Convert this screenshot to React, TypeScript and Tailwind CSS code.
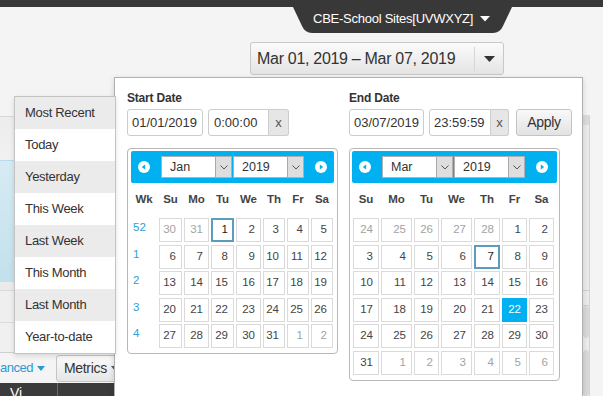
import React from "react";

const cal1Rows: string[][] = [
  ["~30", "~31", "*1", "2", "3", "4", "5"],
  ["6", "7", "8", "9", "10", "11", "12"],
  ["13", "14", "15", "16", "17", "18", "19"],
  ["20", "21", "22", "23", "24", "25", "26"],
  ["27", "28", "29", "30", "31", "~1", "~2"],
];
const cal1Wk = ["52", "1", "2", "3", "4"];
const cal2Rows: string[][] = [
  ["~24", "~25", "~26", "~27", "~28", "1", "2"],
  ["3", "4", "5", "6", "*7", "8", "9"],
  ["10", "11", "12", "13", "14", "15", "16"],
  ["17", "18", "19", "20", "21", "#22", "23"],
  ["24", "25", "26", "27", "28", "29", "30"],
  ["31", "~1", "~2", "~3", "~4", "~5", "~6"],
];
const dayNames = ["Su", "Mo", "Tu", "We", "Th", "Fr", "Sa"];
const presets = [
  "Most Recent",
  "Today",
  "Yesterday",
  "This Week",
  "Last Week",
  "This Month",
  "Last Month",
  "Year-to-date",
];

function DayCell({ v }: { v: string }) {
  const mark = v[0];
  const text = mark === "~" || mark === "*" || mark === "#" ? v.slice(1) : v;
  let cls =
    "flex h-[24px] items-center justify-end border border-[#dadada] bg-white pr-[5px] text-[11.5px] text-[#444]";
  if (mark === "~")
    cls =
      "flex h-[24px] items-center justify-end border border-[#dadada] bg-white pr-[5px] text-[11.5px] text-[#a3a3a3]";
  if (mark === "*")
    cls =
      "flex h-[24px] items-center justify-end border-2 border-[#5b9cc0] bg-white pr-[4px] text-[11.5px] text-[#222]";
  if (mark === "#")
    cls =
      "flex h-[24px] items-center justify-end border border-[#00b0f0] bg-[#00b0f0] pr-[5px] text-[11.5px] text-white";
  return <div className={cls}>{text}</div>;
}

function NavIcon({ dir }: { dir: "l" | "r" }) {
  return (
    <svg width="12" height="12" viewBox="0 0 12 12" className="shrink-0">
      <circle cx="6" cy="6" r="6" fill="#ffffff" />
      {dir === "l" ? (
        <polygon points="7.2,3.4 7.2,8.6 3.8,6" fill="#00b0f0" />
      ) : (
        <polygon points="4.8,3.4 4.8,8.6 8.2,6" fill="#00b0f0" />
      )}
    </svg>
  );
}

function Select({ label }: { label: string }) {
  return (
    <div className="flex h-[22px] w-[71px] border border-[#b0b0b0] bg-white">
      <span className="flex-1 pl-[8px] text-[12.5px] leading-[20px] text-[#333]">{label}</span>
      <span className="flex w-[16px] items-center justify-center border-l border-[#a9a9a9] bg-[#dedede]">
        <svg width="8" height="5" viewBox="0 0 8 5">
          <polyline points="0.5,0.5 4,4 7.5,0.5" fill="none" stroke="#555" strokeWidth="1" />
        </svg>
      </span>
    </div>
  );
}

function CalHeader({ month }: { month: string }) {
  return (
    <div className="flex h-[32px] items-center rounded-[2px] bg-[#00b0f0]">
      <div className="ml-[7px]">
        <NavIcon dir="l" />
      </div>
      <div className="ml-[11px]">
        <Select label={month} />
      </div>
      <div className="ml-[1px]">
        <Select label="2019" />
      </div>
      <div className="ml-[11px]">
        <NavIcon dir="r" />
      </div>
    </div>
  );
}

function Calendar1() {
  return (
    <div className="w-[211px] rounded-[4px] border border-[#b8b8b8] bg-white px-[3px] pb-[5px] pt-[2px]">
      <CalHeader month="Jan" />
      <div className="mt-[4px] grid h-[26px] grid-cols-[26px_23px_25px_23px_25px_22px_22px_22px] items-center gap-x-[2px] text-center text-[11.5px] font-bold text-[#444]">
        <span>Wk</span>
        {dayNames.map((d) => (
          <span key={d}>{d}</span>
        ))}
      </div>
      <div className="mt-[5px] grid grid-cols-[26px_23px_25px_23px_25px_22px_22px_22px] gap-x-[2px] gap-y-[2.5px]">
        {cal1Rows.map((row, i) => (
          <React.Fragment key={i}>
            <div className="h-[24px] pl-[2px] pt-[1px] text-[11.5px] text-[#2a9fd8]">{cal1Wk[i]}</div>
            {row.map((v, j) => (
              <DayCell key={j} v={v} />
            ))}
          </React.Fragment>
        ))}
      </div>
    </div>
  );
}

function Calendar2() {
  return (
    <div className="w-[211px] rounded-[4px] border border-[#b8b8b8] bg-white px-[2px] pb-[5px] pt-[2px]">
      <CalHeader month="Mar" />
      <div className="ml-[1px] mt-[4px] grid h-[26px] grid-cols-[26px_31px_25px_31px_26px_25px_25px] items-center gap-x-[2px] text-center text-[11.5px] font-bold text-[#444]">
        {dayNames.map((d) => (
          <span key={d}>{d}</span>
        ))}
      </div>
      <div className="ml-[1px] mt-[5px] grid grid-cols-[26px_31px_25px_31px_26px_25px_25px] gap-x-[2px] gap-y-[2.5px]">
        {cal2Rows.map((row, i) => (
          <React.Fragment key={i}>
            {row.map((v, j) => (
              <DayCell key={j} v={v} />
            ))}
          </React.Fragment>
        ))}
      </div>
    </div>
  );
}

export default function App() {
  return (
    <div className="relative h-[396px] w-[603px] overflow-hidden bg-[#f4f4f4] font-['Liberation_Sans',Arial,sans-serif]">
      {/* top bar */}
      <div className="h-[7px] bg-[#383838]" />
      <div className="flex justify-end pr-[91px]">
        <div className="relative flex h-[26px] w-[219px] items-center pb-[3px] pl-[20px]">
          <svg className="absolute inset-0" width="219" height="26" viewBox="0 0 219 26">
            <path d="M0,0 L219,0 L210,19 Q207,26 200,26 L19,26 Q12,26 9,19 Z" fill="#383838" />
          </svg>
          <span className="relative text-[13px] tracking-[-0.25px] text-white">CBE-School Sites[UVWXYZ]</span>
          <svg className="relative ml-[7px]" width="10" height="6" viewBox="0 0 10 6">
            <polygon points="0,0 10,0 5,5.5" fill="#ffffff" />
          </svg>
        </div>
      </div>

      {/* date range button */}
      <div className="mt-[9px] flex justify-end pr-[99px]">
        <div className="flex h-[33px] w-[254px] items-center rounded-[3px] border border-[#c8c8c8] bg-gradient-to-b from-[#fbfbfb] to-[#e4e4e4]">
          <span className="flex-1 pl-[6px] text-[16px] tracking-[-0.3px] text-[#333]">Mar 01, 2019 – Mar 07, 2019</span>
          <span className="h-[24px] border-l border-[#d6d6d6]" />
          <span className="flex w-[28px] items-center justify-center">
            <svg width="11" height="6" viewBox="0 0 11 6">
              <polygon points="0,0 11,0 5.5,6" fill="#333" />
            </svg>
          </span>
        </div>
      </div>

      {/* page body behind the popup */}
      <div className="flex h-[321px]">
        <div className="flex w-[114px] flex-col">
          <div className="h-[41px] shrink-0" />
          <div className="h-px shrink-0 bg-[#d8d8d8]" />
          <div className="h-[43px] shrink-0 bg-gradient-to-b from-[#ededed] to-[#f1f1f1]" />
          <div className="h-[122px] shrink-0 border-t border-[#b7dbe9] bg-gradient-to-b from-[#d6ebf3] to-[#c2e1ec]" />
          <div className="h-[8px] shrink-0 bg-[#ebebeb]" />
          <div className="h-px shrink-0 bg-[#d9d9d9]" />
          <div className="h-[31px] shrink-0 bg-[#efefef]" />
          <div className="h-px shrink-0 bg-[#dcdcdc]" />
          <div className="h-[29px] shrink-0 bg-[#f0f0f0]" />
          <div className="h-px shrink-0 bg-[#cfcfcf]" />
          <div className="flex h-[30px] shrink-0 items-center">
            <span className="text-[13px] tracking-[-0.5px] text-[#2a9ad4]">anced</span>
            <svg className="ml-[4px] shrink-0" width="8" height="5" viewBox="0 0 8 5">
              <polygon points="0,0 8,0 4,5" fill="#2a9ad4" />
            </svg>
            <div className="ml-[11px] flex h-[27px] w-[70px] shrink-0 items-center rounded-[3px] border border-[#c6c6c6] bg-gradient-to-b from-[#fbfbfb] to-[#e6e6e6] pl-[7px]">
              <span className="text-[14px] tracking-[-0.3px] text-[#333]">Metrics</span>
              <svg className="ml-[4px]" width="8" height="5" viewBox="0 0 8 5">
                <polygon points="0,0 8,0 4,5" fill="#555" />
              </svg>
            </div>
          </div>
          <div className="flex min-h-0 flex-1 overflow-hidden bg-[#3b3b3b]">
            <span className="pl-[10px] pt-[2px] text-[14px] leading-[16px] text-white">Vi</span>
            <span className="ml-[35px] border-l border-[#6a6a6a]" />
          </div>
        </div>
        <div className="flex-1" />
        <div className="flex w-[21px] flex-col pt-[40px]">
          <div className="ml-[1px] flex min-h-0 w-[7px] flex-1 flex-col border-r border-[#d4d4d4] bg-[#ececec]">
            <div className="h-[10px] shrink-0 bg-[#dcdcdc]" />
            <div className="h-[166px] shrink-0 border-b border-[#d0d0d0]" />
            <div className="h-[15px] shrink-0 border-b border-[#d0d0d0]" />
            <div className="h-[32px] shrink-0 rounded-[3px] bg-[#d9d9d9]" />
            <div className="h-[12px] shrink-0" />
            <div className="min-h-0 flex-1 rounded-[3px] bg-[#d9d9d9]" />
          </div>
        </div>
      </div>

      {/* date picker popup */}
      <div className="absolute left-[114px] top-[77px] h-[330px] w-[469px] border border-[#b0b0b0] bg-white shadow-[0_2px_6px_rgba(0,0,0,0.15)]">
        <div className="flex gap-[12px] pl-[12px] pt-[12px]">
          <div className="flex w-[210px] flex-col">
            <div className="text-[12px] font-bold leading-[16px] tracking-[-0.2px] text-[#333]">Start Date</div>
            <div className="mt-[3px] flex h-[27px]">
              <div className="w-[76px] rounded-[3px] border border-[#cccccc] bg-white pl-[4px] text-[13px] leading-[25px] text-[#333]">01/01/2019</div>
              <div className="ml-[5px] flex">
                <div className="w-[61px] rounded-l-[3px] border border-[#cccccc] bg-white pl-[5px] text-[13px] leading-[25px] text-[#333]">0:00:00</div>
                <div className="w-[20px] rounded-r-[3px] border border-l-0 border-[#cccccc] bg-[#e6e6e6] text-center text-[13px] leading-[25px] text-[#555]">x</div>
              </div>
            </div>
            <div className="mt-[12px]">
              <Calendar1 />
            </div>
          </div>
          <div className="flex w-[224px] flex-col">
            <div className="text-[12px] font-bold leading-[16px] tracking-[-0.2px] text-[#333]">End Date</div>
            <div className="mt-[3px] flex h-[27px]">
              <div className="w-[75px] rounded-[3px] border border-[#cccccc] bg-white pl-[4px] text-[13px] leading-[25px] text-[#333]">03/07/2019</div>
              <div className="ml-[5px] flex">
                <div className="w-[62px] rounded-l-[3px] border border-[#cccccc] bg-white pl-[4px] text-[13px] leading-[25px] text-[#333]">23:59:59</div>
                <div className="w-[18px] rounded-r-[3px] border border-l-0 border-[#cccccc] bg-[#e6e6e6] text-center text-[13px] leading-[25px] text-[#555]">x</div>
              </div>
              <div className="ml-[7px] w-[56px] rounded-[3px] border border-[#c4c4c4] bg-gradient-to-b from-[#f9f9f9] to-[#e2e2e2] text-center text-[14px] leading-[25px] tracking-[-0.3px] text-[#333]">Apply</div>
            </div>
            <div className="mt-[12px]">
              <Calendar2 />
            </div>
          </div>
        </div>
      </div>

      {/* preset menu */}
      <div className="absolute left-[14px] top-[96px] w-[102px] border border-[#c4c4c4] bg-white shadow-[0_2px_5px_rgba(0,0,0,0.12)]">
        {presets.map((p, i) => (
          <div
            key={p}
            className={
              i % 2 === 0
                ? "h-[32px] bg-[#ebebeb] pl-[10px] text-[13px] leading-[32px] tracking-[-0.3px] text-[#333]"
                : "h-[32px] bg-white pl-[10px] text-[13px] leading-[32px] tracking-[-0.3px] text-[#333]"
            }
          >
            {p}
          </div>
        ))}
      </div>
    </div>
  );
}
